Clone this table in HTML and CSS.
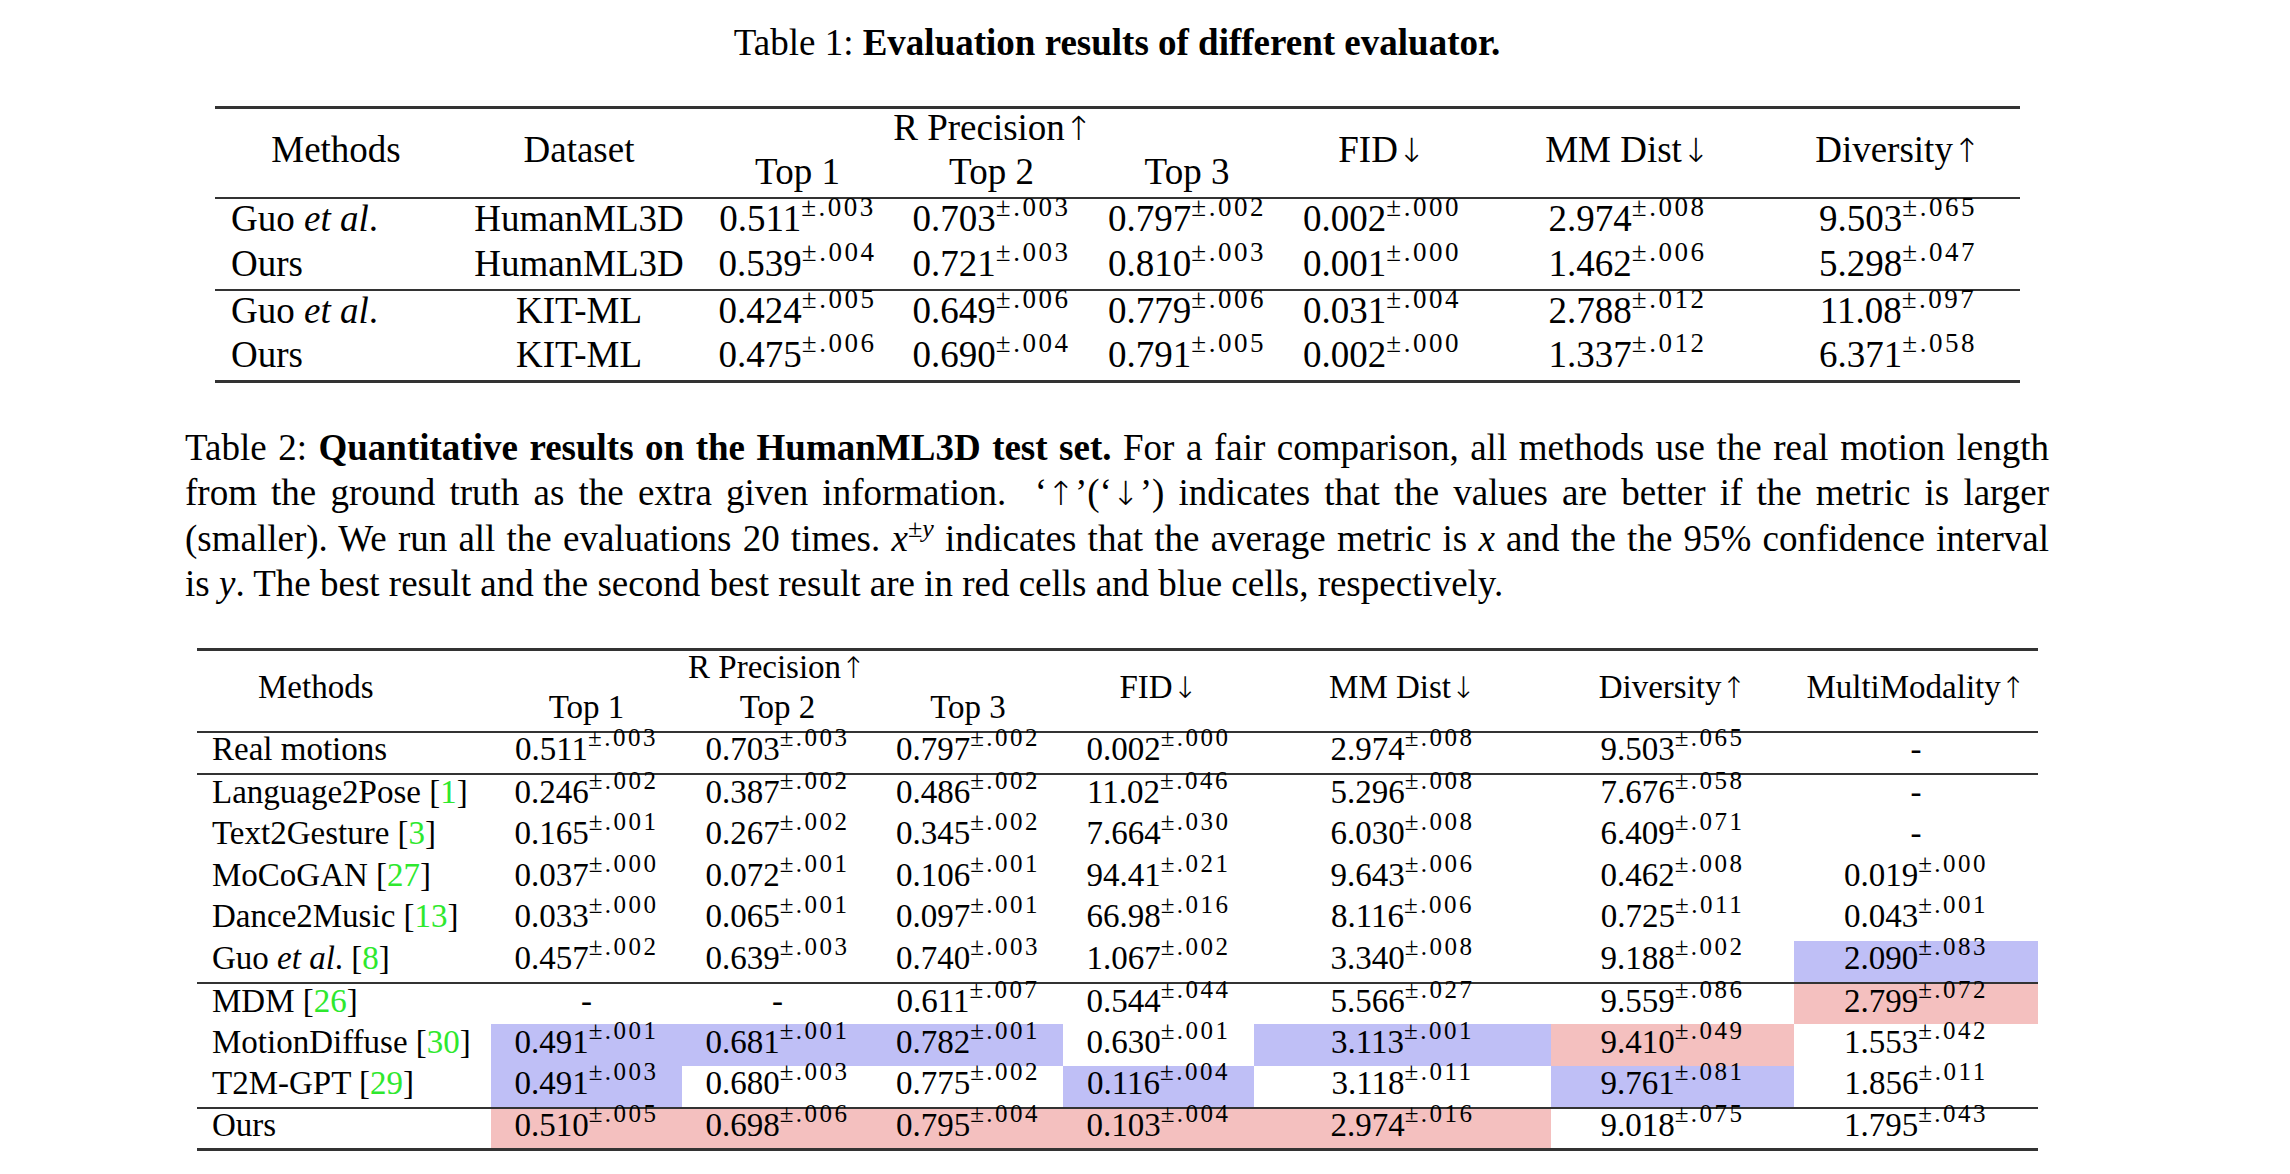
FILE: index.html
```html
<!DOCTYPE html>
<html lang="en">
<head>
<meta charset="utf-8">
<title>Tables</title>
<link rel="stylesheet" href="styles.css">
</head>
<body>
<main class="page">
  <p class="title">Table 1: <b>Evaluation results of different evaluator.</b></p>
  <table class="tbl t1">
    <colgroup>
      <col class="a1"><col class="a2"><col class="a3"><col class="a4"><col class="a5"><col class="a6"><col class="a7"><col class="a8">
    </colgroup>
    <thead>
      <tr>
        <th rowspan="2">Methods</th>
        <th rowspan="2">Dataset</th>
        <th colspan="3" class="rp">R Precision<span class="arr">↑</span></th>
        <th rowspan="2">FID<span class="arr">↓</span></th>
        <th rowspan="2">MM Dist<span class="arr">↓</span></th>
        <th rowspan="2">Diversity<span class="arr">↑</span></th>
      </tr>
      <tr>
        <th class="top">Top 1</th><th class="top">Top 2</th><th class="top">Top 3</th>
      </tr>
    </thead>
    <tbody>
      <tr><td class="m">Guo <i>et al</i>.</td><td>HumanML3D</td><td>0.511<sup>±.003</sup></td><td>0.703<sup>±.003</sup></td><td>0.797<sup>±.002</sup></td><td>0.002<sup>±.000</sup></td><td>2.974<sup>±.008</sup></td><td>9.503<sup>±.065</sup></td></tr>
      <tr><td class="m">Ours</td><td>HumanML3D</td><td>0.539<sup>±.004</sup></td><td>0.721<sup>±.003</sup></td><td>0.810<sup>±.003</sup></td><td>0.001<sup>±.000</sup></td><td>1.462<sup>±.006</sup></td><td>5.298<sup>±.047</sup></td></tr>
    </tbody>
    <tbody>
      <tr><td class="m">Guo <i>et al</i>.</td><td>KIT-ML</td><td>0.424<sup>±.005</sup></td><td>0.649<sup>±.006</sup></td><td>0.779<sup>±.006</sup></td><td>0.031<sup>±.004</sup></td><td>2.788<sup>±.012</sup></td><td>11.08<sup>±.097</sup></td></tr>
      <tr><td class="m">Ours</td><td>KIT-ML</td><td>0.475<sup>±.006</sup></td><td>0.690<sup>±.004</sup></td><td>0.791<sup>±.005</sup></td><td>0.002<sup>±.000</sup></td><td>1.337<sup>±.012</sup></td><td>6.371<sup>±.058</sup></td></tr>
    </tbody>
  </table>

  <p class="caption">
    <span class="cl">Table 2: <b>Quantitative results on the HumanML3D test set.</b> For a fair comparison, all methods use the real motion length</span>
    <span class="cl">from the ground truth as the extra given information. &nbsp;‘<span class="arr">↑</span>’(‘<span class="arr">↓</span>’) indicates that the values are better if the metric is larger</span>
    <span class="cl">(smaller). We run all the evaluations 20 times. <i>x</i><sup>±<i>y</i></sup> indicates that the average metric is <i>x</i> and the the 95% confidence interval</span>
    <span class="cl last">is <i>y</i>. The best result and the second best result are in red cells and blue cells, respectively.</span>
  </p>

  <table class="tbl t2">
    <colgroup>
      <col class="b1"><col class="b2"><col class="b3"><col class="b4"><col class="b5"><col class="b6"><col class="b7"><col class="b8">
    </colgroup>
    <thead>
      <tr>
        <th rowspan="2" class="hm">Methods</th>
        <th colspan="3" class="rp">R Precision<span class="arr">↑</span></th>
        <th rowspan="2">FID<span class="arr">↓</span></th>
        <th rowspan="2">MM Dist<span class="arr">↓</span></th>
        <th rowspan="2">Diversity<span class="arr">↑</span></th>
        <th rowspan="2">MultiModality<span class="arr">↑</span></th>
      </tr>
      <tr>
        <th class="top">Top 1</th><th class="top">Top 2</th><th class="top">Top 3</th>
      </tr>
    </thead>
    <tbody>
      <tr><td class="m">Real motions</td><td>0.511<sup>±.003</sup></td><td>0.703<sup>±.003</sup></td><td>0.797<sup>±.002</sup></td><td>0.002<sup>±.000</sup></td><td>2.974<sup>±.008</sup></td><td>9.503<sup>±.065</sup></td><td>-</td></tr>
    </tbody>
    <tbody>
      <tr><td class="m">Language2Pose [<span class="cite">1</span>]</td><td>0.246<sup>±.002</sup></td><td>0.387<sup>±.002</sup></td><td>0.486<sup>±.002</sup></td><td>11.02<sup>±.046</sup></td><td>5.296<sup>±.008</sup></td><td>7.676<sup>±.058</sup></td><td>-</td></tr>
      <tr><td class="m">Text2Gesture [<span class="cite">3</span>]</td><td>0.165<sup>±.001</sup></td><td>0.267<sup>±.002</sup></td><td>0.345<sup>±.002</sup></td><td>7.664<sup>±.030</sup></td><td>6.030<sup>±.008</sup></td><td>6.409<sup>±.071</sup></td><td>-</td></tr>
      <tr><td class="m">MoCoGAN [<span class="cite">27</span>]</td><td>0.037<sup>±.000</sup></td><td>0.072<sup>±.001</sup></td><td>0.106<sup>±.001</sup></td><td>94.41<sup>±.021</sup></td><td>9.643<sup>±.006</sup></td><td>0.462<sup>±.008</sup></td><td>0.019<sup>±.000</sup></td></tr>
      <tr><td class="m">Dance2Music [<span class="cite">13</span>]</td><td>0.033<sup>±.000</sup></td><td>0.065<sup>±.001</sup></td><td>0.097<sup>±.001</sup></td><td>66.98<sup>±.016</sup></td><td>8.116<sup>±.006</sup></td><td>0.725<sup>±.011</sup></td><td>0.043<sup>±.001</sup></td></tr>
      <tr><td class="m">Guo <i>et al</i>. [<span class="cite">8</span>]</td><td>0.457<sup>±.002</sup></td><td>0.639<sup>±.003</sup></td><td>0.740<sup>±.003</sup></td><td>1.067<sup>±.002</sup></td><td>3.340<sup>±.008</sup></td><td>9.188<sup>±.002</sup></td><td class="blue">2.090<sup>±.083</sup></td></tr>
    </tbody>
    <tbody>
      <tr><td class="m">MDM [<span class="cite">26</span>]</td><td>-</td><td>-</td><td>0.611<sup>±.007</sup></td><td>0.544<sup>±.044</sup></td><td>5.566<sup>±.027</sup></td><td>9.559<sup>±.086</sup></td><td class="red">2.799<sup>±.072</sup></td></tr>
      <tr><td class="m">MotionDiffuse [<span class="cite">30</span>]</td><td class="blue">0.491<sup>±.001</sup></td><td class="blue">0.681<sup>±.001</sup></td><td class="blue">0.782<sup>±.001</sup></td><td>0.630<sup>±.001</sup></td><td class="blue">3.113<sup>±.001</sup></td><td class="red">9.410<sup>±.049</sup></td><td>1.553<sup>±.042</sup></td></tr>
      <tr><td class="m">T2M-GPT [<span class="cite">29</span>]</td><td class="blue">0.491<sup>±.003</sup></td><td>0.680<sup>±.003</sup></td><td>0.775<sup>±.002</sup></td><td class="blue">0.116<sup>±.004</sup></td><td>3.118<sup>±.011</sup></td><td class="blue">9.761<sup>±.081</sup></td><td>1.856<sup>±.011</sup></td></tr>
    </tbody>
    <tbody>
      <tr><td class="m">Ours</td><td class="red">0.510<sup>±.005</sup></td><td class="red">0.698<sup>±.006</sup></td><td class="red">0.795<sup>±.004</sup></td><td class="red">0.103<sup>±.004</sup></td><td class="red">2.974<sup>±.016</sup></td><td>9.018<sup>±.075</sup></td><td>1.795<sup>±.043</sup></td></tr>
    </tbody>
  </table>
</main>
</body>
</html>
```

FILE: styles.css
```css
html, body {
  margin: 0;
  padding: 0;
  background: #ffffff;
  color: #000000;
  font-family: "Liberation Serif", "Times New Roman", serif;
}

.page {
  width: 1864px;
  margin-left: 185px;
  padding-top: 21px;
}

.title {
  margin: 0;
  font-size: 37px;
  line-height: 44px;
  text-align: center;
}

.title b { font-weight: bold; }

.arr {
  font-family: "DejaVu Sans", sans-serif;
  font-weight: 200;
  font-size: 0.9em;
}

/* ---------- tables ---------- */
.tbl {
  border-collapse: collapse;
  table-layout: fixed;
  border-top: 3px solid #333;
  border-bottom: 3px solid #333;
}

.tbl tbody { border-top: 2px solid #333; }

.tbl th,
.tbl td {
  padding: 0 0 6px 0;
  text-align: center;
  vertical-align: middle;
  font-weight: normal;
  white-space: nowrap;
  line-height: 1;
}

.tbl td.m { text-align: left; }

.tbl sup {
  line-height: 0;
}

.cite { color: #2ee82e; }

.blue { background: #bfbff6; }
.red  { background: #f4c0bf; }

/* Table 1 */
.t1 {
  width: 1805px;
  margin: 41px 0 0 30px;
  font-size: 37px;
}
.t1 col.a1 { width: 242px; }
.t1 col.a2 { width: 244px; }
.t1 col.a3 { width: 193px; }
.t1 col.a4 { width: 195px; }
.t1 col.a5 { width: 196px; }
.t1 col.a6 { width: 194px; }
.t1 col.a7 { width: 297px; }
.t1 col.a8 { width: 244px; }
.t1 tr { height: 46px; }
.t1 thead tr { height: 45px; }
.t1 td.m { padding-left: 16px; }
.t1 sup {
  font-size: 27px;
  vertical-align: 15px;
  letter-spacing: 2.5px;
}

/* caption */
.caption {
  margin: 42px 0 0 0;
  font-size: 37px;
  line-height: 45px;
}
.caption .cl {
  display: block;
  text-align: justify;
  text-align-last: justify;
}
.caption .cl.last {
  text-align: left;
  text-align-last: left;
}
.caption sup {
  font-size: 26px;
  vertical-align: 14px;
  line-height: 0;
}

/* Table 2 */
.t2 {
  width: 1841px;
  margin: 42px 0 0 12px;
  font-size: 33px;
}
.t2 col.b1 { width: 294px; }
.t2 col.b2 { width: 191px; }
.t2 col.b3 { width: 191px; }
.t2 col.b4 { width: 190px; }
.t2 col.b5 { width: 191px; }
.t2 col.b6 { width: 297px; }
.t2 col.b7 { width: 243px; }
.t2 col.b8 { width: 244px; }
.t2 tr { height: 41.8px; }
.t2 thead tr { height: 41.2px; }
.t2 th.hm { text-align: left; padding-left: 61px; }
.t2 td.m { padding-left: 15px; }
.t2 sup {
  font-size: 25px;
  vertical-align: 14px;
  letter-spacing: 2.5px;
}
```
